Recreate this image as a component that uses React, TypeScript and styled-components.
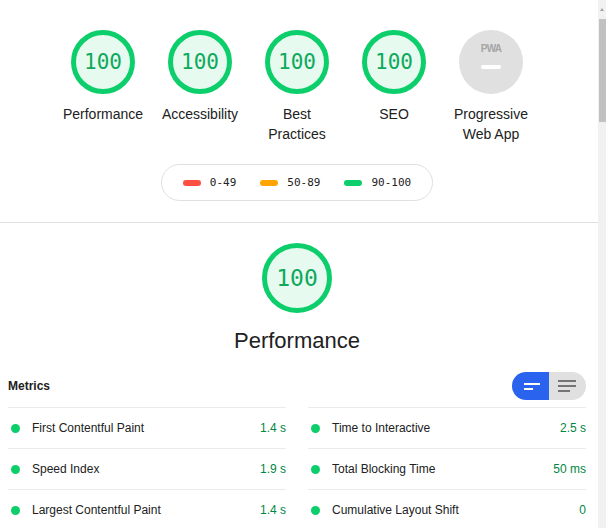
import React from 'react';
import styled, { createGlobalStyle } from 'styled-components';

const GlobalStyle = createGlobalStyle`
  html, body {
    margin: 0;
    padding: 0;
    background: #ffffff;
    overflow: hidden;
  }
  body {
    font-family: 'Liberation Sans', Arial, sans-serif;
    color: #212121;
  }
`;

const PASS = '#0cce6b';
const PASS_TEXT = '#0ea95c';
const MONO = `'DejaVu Sans Mono', 'Liberation Mono', monospace`;

const Page = styled.div`
  display: flex;
  width: 606px;
  height: 528px;
  overflow: hidden;
`;

const Main = styled.main`
  width: 598px;
  flex: none;
  display: flex;
  flex-direction: column;
`;

const Section = styled.section<{ $top?: number }>`
  width: 594px;
  margin-top: ${(p) => p.$top ?? 0}px;
  display: flex;
  flex-direction: column;
  align-items: center;
`;

const GaugeRow = styled.div`
  display: flex;
  justify-content: center;
  padding-top: 30px;
`;

const GaugeWrapper = styled.div`
  width: 97px;
  display: flex;
  flex-direction: column;
  align-items: center;
`;

const Ring = styled.div<{ $size: number; $font: number }>`
  width: ${(p) => p.$size}px;
  height: ${(p) => p.$size}px;
  box-sizing: border-box;
  border: 5px solid ${PASS};
  border-radius: 50%;
  background: #e7faf0;
  display: flex;
  align-items: center;
  justify-content: center;
  font-family: ${MONO};
  font-size: ${(p) => p.$font}px;
  color: ${PASS_TEXT};
`;

const PwaBadge = styled.div`
  width: 64px;
  height: 64px;
  border-radius: 50%;
  background: #e0e0e0;
  display: flex;
  flex-direction: column;
  align-items: center;
  padding-top: 13px;
  box-sizing: border-box;
`;

const PwaText = styled.span`
  font-size: 10px;
  font-weight: bold;
  color: #a5a5a5;
  letter-spacing: -0.8px;
  line-height: 12px;
`;

const PwaDash = styled.span`
  width: 20px;
  height: 4px;
  border-radius: 2px;
  background: #ffffff;
  margin-top: 10px;
`;

const GaugeLabel = styled.div`
  margin-top: 10px;
  padding: 0 6px;
  font-size: 14px;
  line-height: 20px;
  text-align: center;
  color: #212121;
`;

const Legend = styled.div`
  margin-top: 20px;
  height: 37px;
  box-sizing: border-box;
  border: 1px solid #e0e0e0;
  border-radius: 19px;
  padding: 0 21px;
  display: flex;
  align-items: center;
  gap: 24px;
`;

const LegendItem = styled.div`
  display: flex;
  align-items: center;
  gap: 9px;
  font-family: ${MONO};
  font-size: 11px;
  color: #212121;
`;

const LegendBar = styled.span<{ $color: string }>`
  width: 18px;
  height: 6px;
  border-radius: 3px;
  background: ${(p) => p.$color};
`;

const Divider = styled.hr`
  width: 100%;
  margin: 21px 0 0;
  border: none;
  border-top: 1px solid #e0e0e0;
`;

const BigTitle = styled.h2`
  margin: 14px 0 0;
  font-size: 22px;
  font-weight: normal;
  line-height: 28px;
  color: #212121;
`;

const Metrics = styled.div`
  width: 594px;
  box-sizing: border-box;
  padding: 0 8px;
  margin-top: 17px;
`;

const MetricsHeader = styled.div`
  display: flex;
  align-items: center;
  justify-content: space-between;
  height: 28px;
  margin-bottom: 7px;
`;

const MetricsTitle = styled.span`
  font-size: 12px;
  font-weight: bold;
  color: #212121;
`;

const Toggle = styled.div`
  display: flex;
  height: 28px;
  border-radius: 14px;
  overflow: hidden;
`;

const ToggleHalf = styled.div<{ $active?: boolean }>`
  width: 37px;
  display: flex;
  align-items: center;
  justify-content: center;
  background: ${(p) => (p.$active ? '#2a63ee' : '#e0e0e0')};
`;

const MetricGrid = styled.div`
  display: grid;
  grid-template-columns: 1fr 1fr;
  column-gap: 22px;
`;

const MetricRow = styled.div`
  height: 41px;
  box-sizing: border-box;
  border-top: 1px solid #ebebeb;
  display: flex;
  align-items: center;
  font-size: 12px;
`;

const Dot = styled.span`
  width: 9px;
  height: 9px;
  border-radius: 50%;
  background: ${PASS};
  margin: 0 12px 0 3px;
  flex: none;
`;

const MetricName = styled.span`
  flex: 1;
  color: #212121;
`;

const MetricValue = styled.span`
  color: #018642;
`;

const ScrollTrack = styled.div`
  width: 8px;
  flex: none;
  background: #f1f1f1;
  display: flex;
  flex-direction: column;
  align-items: flex-end;
`;

const ScrollArrow = styled.div`
  height: 19px;
  width: 8px;
  display: flex;
  align-items: center;
  justify-content: center;
  &::before {
    content: '';
    border-left: 2.5px solid transparent;
    border-right: 2.5px solid transparent;
    border-bottom: 3px solid #a3a3a3;
  }
`;

const ScrollThumb = styled.div`
  width: 7px;
  height: 103px;
  background: #c1c1c1;
`;

const gauges = [
  { label: 'Performance', score: 100 },
  { label: 'Accessibility', score: 100 },
  { label: 'Best Practices', score: 100 },
  { label: 'SEO', score: 100 },
];

const metrics = [
  ['First Contentful Paint', '1.4 s'],
  ['Time to Interactive', '2.5 s'],
  ['Speed Index', '1.9 s'],
  ['Total Blocking Time', '50 ms'],
  ['Largest Contentful Paint', '1.4 s'],
  ['Cumulative Layout Shift', '0'],
];

function CompactIcon() {
  return (
    <svg width="16" height="7" viewBox="0 0 16 7" style={{ marginLeft: 2 }}>
      <rect x="0" y="0" width="16" height="2" fill="#fff" />
      <rect x="0" y="5" width="9" height="2" fill="#fff" />
    </svg>
  );
}

function ExpandedIcon() {
  return (
    <svg width="18" height="12" viewBox="0 0 18 12" style={{ marginLeft: -2 }}>
      <rect x="0" y="0" width="18" height="2" fill="#757575" />
      <rect x="0" y="5" width="18" height="2" fill="#757575" />
      <rect x="0" y="10" width="12" height="2" fill="#757575" />
    </svg>
  );
}

export default function App() {
  return (
    <Page>
      <GlobalStyle />
      <Main>
        <Section>
          <GaugeRow>
            {gauges.map((g) => (
              <GaugeWrapper key={g.label}>
                <Ring $size={64} $font={21}>
                  {g.score}
                </Ring>
                <GaugeLabel>{g.label}</GaugeLabel>
              </GaugeWrapper>
            ))}
            <GaugeWrapper>
              <PwaBadge>
                <PwaText>PWA</PwaText>
                <PwaDash />
              </PwaBadge>
              <GaugeLabel>Progressive Web App</GaugeLabel>
            </GaugeWrapper>
          </GaugeRow>
          <Legend>
            <LegendItem>
              <LegendBar $color="#ff4e42" />
              0-49
            </LegendItem>
            <LegendItem>
              <LegendBar $color="#ffa400" />
              50-89
            </LegendItem>
            <LegendItem>
              <LegendBar $color={PASS} />
              90-100
            </LegendItem>
          </Legend>
        </Section>
        <Divider />
        <Section $top={20}>
          <Ring $size={70} $font={23}>
            100
          </Ring>
          <BigTitle>Performance</BigTitle>
        </Section>
        <Metrics>
          <MetricsHeader>
            <MetricsTitle>Metrics</MetricsTitle>
            <Toggle>
              <ToggleHalf $active>
                <CompactIcon />
              </ToggleHalf>
              <ToggleHalf>
                <ExpandedIcon />
              </ToggleHalf>
            </Toggle>
          </MetricsHeader>
          <MetricGrid>
            {metrics.map(([name, value]) => (
              <MetricRow key={name}>
                <Dot />
                <MetricName>{name}</MetricName>
                <MetricValue>{value}</MetricValue>
              </MetricRow>
            ))}
          </MetricGrid>
        </Metrics>
      </Main>
      <ScrollTrack>
        <ScrollArrow />
        <ScrollThumb />
      </ScrollTrack>
    </Page>
  );
}
